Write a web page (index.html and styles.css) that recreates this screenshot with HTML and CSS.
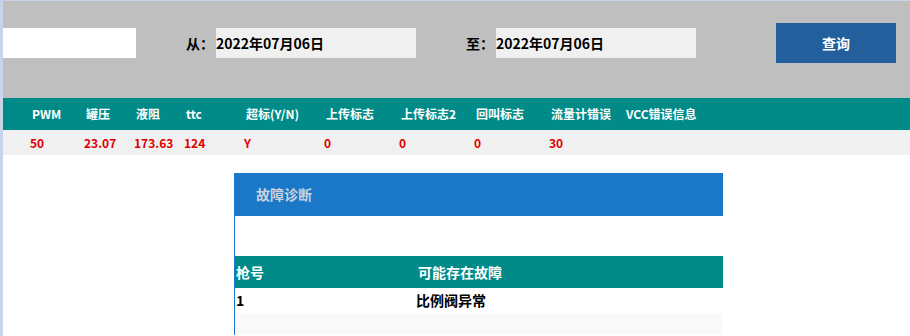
FILE: index.html
```html
<!DOCTYPE html>
<html>
<head>
    <meta charset="utf-8">
    <link rel="stylesheet" href="styles.css">
</head>
<body>
    <div class="page">
        <!-- Search bar -->
        <div class="search-bar">
            <div class="blank-input"></div>
            <span class="label">从：</span>
            <div class="date-input">2022年07月06日</div>
            <span class="label">至：</span>
            <div class="date-input">2022年07月06日</div>
            <button class="query-btn">查询</button>
        </div>

        <!-- Realtime data -->
        <div class="data-grid head">
            <div>PWM</div>
            <div>罐压</div>
            <div>液阻</div>
            <div>ttc</div>
            <div>超标(Y/N)</div>
            <div>上传标志</div>
            <div>上传标志2</div>
            <div>回叫标志</div>
            <div>流量计错误</div>
            <div>VCC错误信息</div>
        </div>
        <div class="data-grid values">
            <div>50</div>
            <div>23.07</div>
            <div>173.63</div>
            <div>124</div>
            <div>Y</div>
            <div>0</div>
            <div>0</div>
            <div>0</div>
            <div>30</div>
            <div></div>
        </div>

        <!-- Fault panel -->
        <div class="fault-panel">
            <div class="fault-title">故障诊断</div>
            <div class="fault-body">
                <div class="fault-row fault-head">
                    <div>枪号</div>
                    <div>可能存在故障</div>
                </div>
                <div class="fault-row">
                    <div>1</div>
                    <div>比例阀异常</div>
                </div>
                <div class="fault-row empty"></div>
            </div>
        </div>
    </div>
</body>
</html>
```

FILE: styles.css
```css
body {
    margin: 0;
    padding: 1px 0 0 3px;
    background: #c8d4e8;
    font-family: "Noto Sans CJK SC", "Liberation Sans", sans-serif;
    font-weight: bold;
    overflow: hidden;
}
.page {
    background: white;
    min-height: 335px;
}
.search-bar {
    background: #bfbfbf;
    height: 97px;
    display: flex;
    align-items: flex-start;
    padding-top: 27px;
    box-sizing: border-box;
}
.blank-input {
    width: 133px;
    height: 30px;
    background: white;
}
.label {
    margin-left: 50px;
    width: 30px;
    font-size: 14px;
    line-height: 30px;
    color: #000;
}
.date-input {
    width: 200px;
    height: 30px;
    line-height: 30px;
    background: #f0f0f0;
    font-size: 14px;
    color: #000;
}
.query-btn {
    margin-left: 80px;
    margin-top: -5px;
    width: 120px;
    height: 40px;
    border: none;
    background: #245f9d;
    color: white;
    font-family: inherit;
    font-weight: bold;
    font-size: 14px;
}
.data-grid {
    display: grid;
    grid-template-columns: 54px 50px 50px 60px 80px 75px 75px 75px 75px auto;
    padding-left: 27px;
    font-size: 12px;
    white-space: nowrap;
}
.data-grid.head {
    background: #008b88;
    color: white;
    height: 32px;
    line-height: 32px;
}
.data-grid.head div {
    padding-left: 2px;
}
.data-grid.values {
    background: #f0f0f0;
    color: #e00000;
    height: 25px;
    line-height: 25px;
}
.fault-panel {
    margin: 18px 0 0 231px;
    width: 489px;
}
.fault-title {
    background: #1b78c8;
    color: #c9d1dc;
    height: 43px;
    line-height: 43px;
    padding-left: 22px;
    font-size: 14px;
}
.fault-body {
    border-left: 1px solid #1b78c8;
    padding-top: 40px;
}
.fault-row {
    display: grid;
    grid-template-columns: 181px auto;
    height: 25px;
    line-height: 25px;
    font-size: 14px;
    color: #000;
}
.fault-row.fault-head {
    background: #008b88;
    color: white;
    height: 32px;
    line-height: 32px;
}
.fault-row div:first-child {
    padding-left: 1px;
}
.fault-row.fault-head div:last-child {
    padding-left: 2px;
}
.fault-row.empty {
    background: #fafafa;
    height: 22px;
}
```
